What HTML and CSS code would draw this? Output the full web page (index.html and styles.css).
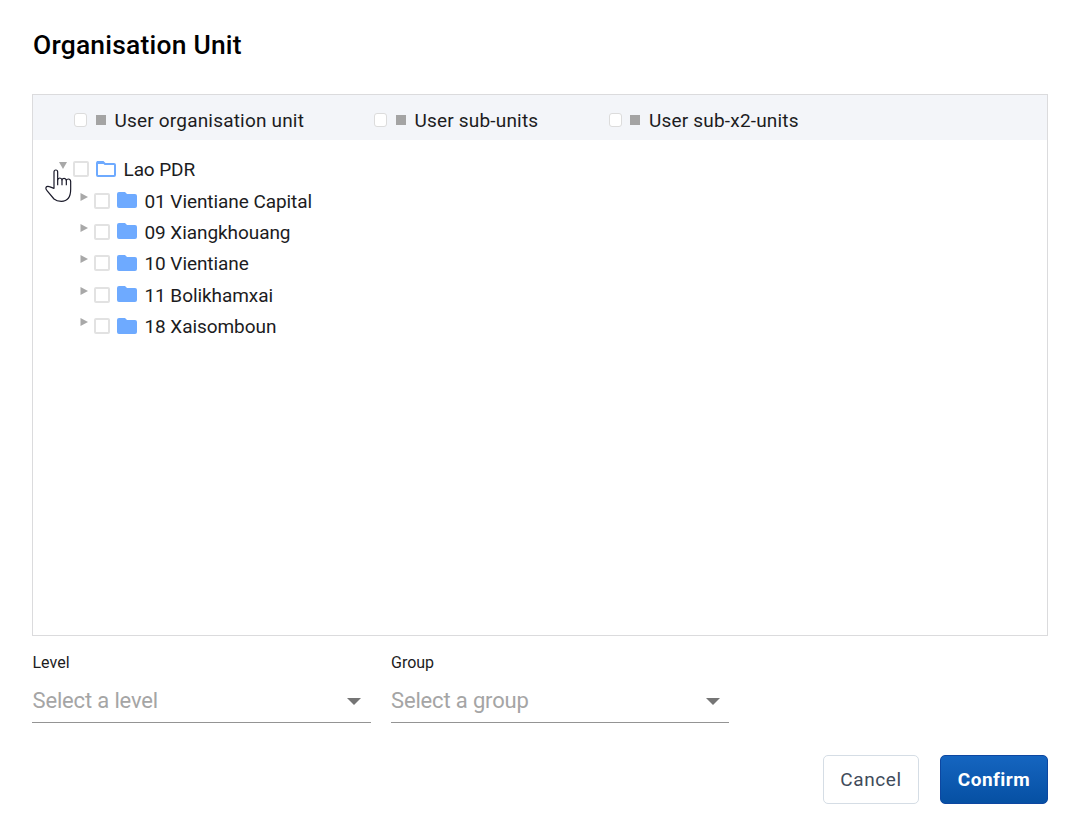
FILE: index.html
```html
<!DOCTYPE html>
<html lang="en">
<head>
<meta charset="utf-8">
<title>Organisation Unit</title>
<link rel="stylesheet" href="styles.css">
</head>
<body>
<main class="dialog">
  <h1 class="title">Organisation Unit</h1>
  <section class="panel">
    <div class="toolbar">
      <label class="option unit"><i class="check"></i><i class="square"></i><span>User organisation unit</span></label>
      <label class="option sub"><i class="check"></i><i class="square"></i><span>User sub-units</span></label>
      <label class="option"><i class="check"></i><i class="square"></i><span>User sub-x2-units</span></label>
    </div>
    <div class="tree">
      <div class="node root"><svg class="arrow" viewBox="0 0 8 8"><path d="M0 1h8L4 8z"/></svg><i class="box"></i><svg class="folder" viewBox="0 0 22 18"><path class="open" d="M3 2h5l2 2h9q1 0 1 1v10q0 1-1 1H3q-1 0-1-1V3q0-1 1-1z"/><path d="M2 1h6l2 3H2z"/></svg><span>Lao PDR</span></div>
      <div class="node"><svg class="arrow" viewBox="0 0 8 8"><path d="M.5 0v8L8 4z"/></svg><i class="box"></i><svg class="folder" viewBox="0 0 22 18"><path d="M3 1h6l2 2h8q2 0 2 2v10q0 2-2 2H3q-2 0-2-2V3q0-2 2-2z"/></svg><span>01 Vientiane Capital</span></div>
      <div class="node"><svg class="arrow" viewBox="0 0 8 8"><path d="M.5 0v8L8 4z"/></svg><i class="box"></i><svg class="folder" viewBox="0 0 22 18"><path d="M3 1h6l2 2h8q2 0 2 2v10q0 2-2 2H3q-2 0-2-2V3q0-2 2-2z"/></svg><span>09 Xiangkhouang</span></div>
      <div class="node"><svg class="arrow" viewBox="0 0 8 8"><path d="M.5 0v8L8 4z"/></svg><i class="box"></i><svg class="folder" viewBox="0 0 22 18"><path d="M3 1h6l2 2h8q2 0 2 2v10q0 2-2 2H3q-2 0-2-2V3q0-2 2-2z"/></svg><span>10 Vientiane</span></div>
      <div class="node"><svg class="arrow" viewBox="0 0 8 8"><path d="M.5 0v8L8 4z"/></svg><i class="box"></i><svg class="folder" viewBox="0 0 22 18"><path d="M3 1h6l2 2h8q2 0 2 2v10q0 2-2 2H3q-2 0-2-2V3q0-2 2-2z"/></svg><span>11 Bolikhamxai</span></div>
      <div class="node"><svg class="arrow" viewBox="0 0 8 8"><path d="M.5 0v8L8 4z"/></svg><i class="box"></i><svg class="folder" viewBox="0 0 22 18"><path d="M3 1h6l2 2h8q2 0 2 2v10q0 2-2 2H3q-2 0-2-2V3q0-2 2-2z"/></svg><span>18 Xaisomboun</span></div>
    </div>
  </section>
  <div class="fields">
    <div class="field"><div class="label">Level</div><div class="select"><span>Select a level</span><svg class="caret" viewBox="0 0 14 7"><path d="M0 0h14L7 7z"/></svg></div></div>
    <div class="field"><div class="label">Group</div><div class="select"><span>Select a group</span><svg class="caret" viewBox="0 0 14 7"><path d="M0 0h14L7 7z"/></svg></div></div>
  </div>
  <div class="actions"><button class="button cancel">Cancel</button><button class="button confirm">Confirm</button></div>
</main>
<svg class="pointer" viewBox="0 0 84 102"><path d="M30 61V12q0-6 5.500-6t5.500 6v24q1-6 6.500-6t6.500 6q1-5 6.500-5t6.500 6q1-4 6.500-4t6.500 7v24q0 36-28 36-14 0-22-7L9 68q-5-5-3-10 3-5 10-2z"/><path d="M41 34v18M54 35v17M67 37v15"/></svg>
</body>
</html>
```
FILE: styles.css
```css
* { box-sizing: border-box; }
body { margin: 0; background: #fff; color: #1c1c1e; font-family: Roboto, sans-serif; }
.dialog { width: 1077px; height: 834px; padding: 30px 29px 0 32px; overflow: hidden; }
.title { margin: 0 0 34px; height: 30px; padding-left: 1px; font-size: 26.4px; line-height: 30px; font-weight: 500; letter-spacing: .23px; color: #000; }
.panel { height: 542px; border: 1px solid #dbdbdd; }
.toolbar { display: flex; height: 45px; padding: 6px 0 0 41px; background: #f3f5f9; }
.option { display: flex; align-items: center; height: 38px; font-size: 19px; letter-spacing: .19px; }
.unit { width: 300px; }
.sub { width: 234.5px; }
.check { width: 13px; height: 14px; border: 1px solid #dcdcdc; border-radius: 3px; background: #fff; }
.square { width: 10px; height: 10px; margin: 0 9px 0 8.500px; background: #a4a4a4; }
.tree { padding: 14px 0 0 47px; }
.node { display: flex; align-items: center; height: 31.4px; font-size: 19px; letter-spacing: -.07px; white-space: pre; }
.root { margin-left: -21px; letter-spacing: -.1px; }
.arrow { width: 8px; height: 8px; margin: -9px 6px 0 0; fill: #a8a8a8; }
.node:not(.root) .arrow { margin-left: -.5px; margin-right: 6.5px; }
.box { width: 16px; height: 16px; margin-top: -1px; border: 2px solid #e2e2e2; border-radius: 2px; }
.folder { width: 22px; height: 18px; margin: -2px 6.5px 0 6px; fill: #6eaaff; }
.open { fill: none; stroke: #6eaaff; stroke-width: 2; }
.fields { display: flex; gap: 20px; margin-top: 17px; }
.field { width: 339px; }
.field + .field { width: 338px; }
.label { height: 20px; line-height: 20px; font-size: 16px; }
.field:first-child span, .field:first-child .label { padding-left: .5px; }
.select { display: flex; justify-content: space-between; align-items: center; height: 50px; padding: 5px 10px 0 0; border-bottom: 1px solid #949494; color: #a5a5a5; font-size: 22px; letter-spacing: -.16px; }
.field + .field .select { padding-right: 9px; }
.caret { width: 14px; height: 7px; margin-top: 3px; fill: #757575; }
.actions { display: flex; justify-content: flex-end; gap: 21px; margin-top: 32px; }
.button { height: 49px; padding: 0; border: 1px solid #d5dde5; border-radius: 5px; background: #fff; color: #404b5a; font: 400 19px Roboto, sans-serif; letter-spacing: .65px; }
.cancel { width: 96px; }
.confirm { width: 108px; border-color: #0d47a1; background: linear-gradient(#1565c0, #0650a3); color: #fff; font-weight: 700; letter-spacing: .5px; }
.pointer { position: absolute; left: 44px; top: 168px; width: 28px; height: 34px; fill: #fff; stroke: #1a1a2a; stroke-width: 3.6; stroke-linejoin: round; }
```
